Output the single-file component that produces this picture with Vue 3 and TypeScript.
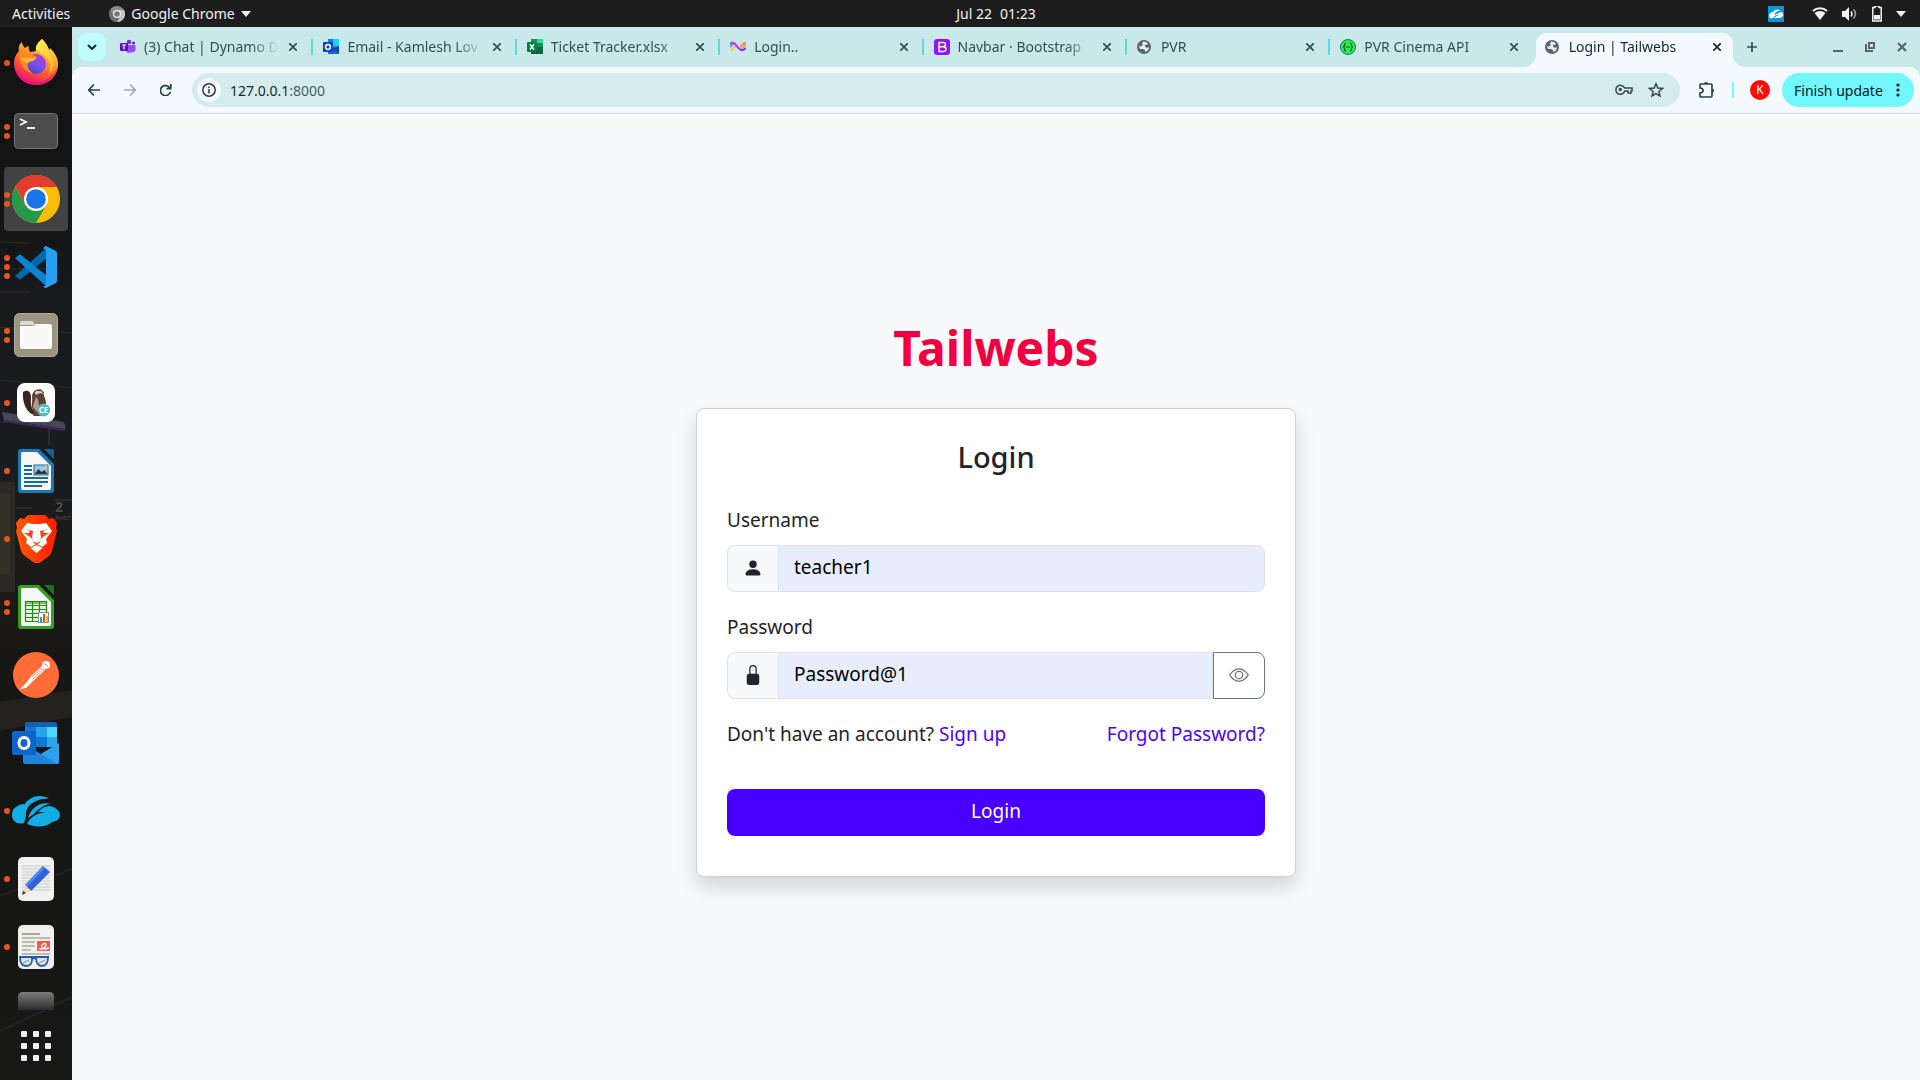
<script setup lang="ts">
import { ref } from 'vue'

interface Tab {
  title: string
  icon: string
  active?: boolean
}

interface DockApp {
  name: string
  windows: number
  focused?: boolean
}

const tabs: Tab[] = [
  { title: '(3) Chat | Dynamo D', icon: 'teams' },
  { title: 'Email - Kamlesh Lov', icon: 'outlook' },
  { title: 'Ticket Tracker.xlsx', icon: 'excel' },
  { title: 'Login..', icon: 'wave' },
  { title: 'Navbar · Bootstrap', icon: 'bootstrap' },
  { title: 'PVR', icon: 'globe' },
  { title: 'PVR Cinema API', icon: 'swagger' },
  { title: 'Login | Tailwebs', icon: 'globe', active: true },
]

const apps: DockApp[] = [
  { name: 'Firefox', windows: 1 },
  { name: 'Terminal', windows: 2 },
  { name: 'Chrome', windows: 2, focused: true },
  { name: 'Code', windows: 3 },
  { name: 'Files', windows: 2 },
  { name: 'DBeaver', windows: 1 },
  { name: 'Writer', windows: 1 },
  { name: 'Brave', windows: 1 },
  { name: 'Calc', windows: 2 },
  { name: 'Postman', windows: 0 },
  { name: 'Outlook', windows: 0 },
  { name: 'Zscaler', windows: 1 },
  { name: 'Editor', windows: 1 },
  { name: 'Documents', windows: 1 },
  { name: 'More', windows: 0 },
]

const username = ref<string>('teacher1')
const password = ref<string>('Password@1')
const visible = ref<boolean>(true)
</script>

<template>
  <div class="desktop">
    <header class="topbar">
      <div class="topbar-left">
        <button class="top-btn">Activities</button>
        <button class="top-btn app-menu">
          <svg width="16" height="16" viewBox="0 0 16 16">
            <circle cx="8" cy="8" r="8" fill="#8c8c8c" />
            <path d="M8 4h7A8 8 0 0 1 8 16l3.500-6z" fill="#c4c4c4" />
            <path d="M1.200 4A8 8 0 0 0 8 16l3-6-6 0z" fill="#6e6e6e" />
            <circle cx="8" cy="8" r="4" fill="#eee" />
            <circle cx="8" cy="8" r="2.800" fill="#777" />
          </svg>
          Google Chrome
          <svg width="10" height="6" viewBox="0 0 10 6"><path d="M0 0h10L5 6z" fill="#f2f2f2" /></svg>
        </button>
      </div>
      <button class="top-btn clock"><span>Jul 22</span><span>01:23</span></button>
      <div class="tray">
        <svg class="tray-cloud" width="16" height="16" viewBox="0 0 16 16">
          <path d="M0 0h16v16H0z" fill="#0a96dc" />
          <path d="M1 10c0-3 2-4 4-4 2-3 6-3 8-1-4-1-6 2-7 4l7-3c3 1 3 5-1 6H6c2-2 4-3 6-3-3-1-5 0-7 3-2 1-4 0-4-2z" fill="#fff" />
        </svg>
        <svg width="16" height="14" viewBox="0 0 16 14">
          <path d="M1 4a10.500 10.500 0 0 1 14 0" fill="none" stroke="#f2f2f2" stroke-width="2" />
          <path d="M2.500 6a8.500 8.500 0 0 1 11 0L8 13z" fill="#f2f2f2" />
        </svg>
        <svg width="16" height="14" viewBox="0 0 16 14">
          <path d="M0 4h3l4-4v14l-4-4H0z" fill="#f2f2f2" />
          <path d="M9 4.500q2 2.500 0 5" fill="none" stroke="#f2f2f2" stroke-width="1.500" />
          <path d="M11.500 2.500q4 4.500 0 9" fill="none" stroke="#a5a5a5" stroke-width="1.500" />
        </svg>
        <svg width="10" height="16" viewBox="0 0 10 16">
          <path d="M3 0h4v1.500h2.200V15H.8V1.500H3z" fill="none" stroke="#f2f2f2" stroke-width="1.500" />
          <path d="M2 9h6v4.500H2z" fill="#f2f2f2" />
        </svg>
        <svg width="10" height="6" viewBox="0 0 10 6"><path d="M0 0h10L5 6z" fill="#f2f2f2" /></svg>
      </div>
    </header>

    <div class="workspace">
      <nav class="dock" aria-label="Dock">
        <svg class="wallpaper" width="72" height="1053" viewBox="0 27 72 1053" aria-hidden="true">
          <defs>
            <linearGradient id="wall" x1="0" y1="0" x2="0" y2="1">
              <stop offset="0" stop-color="#131313" />
              <stop offset=".18" stop-color="#141414" />
              <stop offset=".27" stop-color="#191a1c" />
              <stop offset=".42" stop-color="#1b1c1f" />
              <stop offset=".52" stop-color="#1b1a18" />
              <stop offset=".66" stop-color="#151515" />
              <stop offset="1" stop-color="#181815" />
            </linearGradient>
          </defs>
          <path d="M0 27h72v1053H0z" fill="url(#wall)" />
          <path d="M0 242l30 1M0 292h30M0 269h60M0 327l72 6M0 380l72 8" stroke="#3a352a" opacity=".7" />
          <path d="M2 412l62 10 2 7-62-9z" fill="#4b4657" />
          <path d="M3 421l62 9" stroke="#3c2a62" stroke-width="2" />
          <path d="M0 482h15v110H0z" fill="#2c2924" />
          <path d="M0 494h10v80H0z" fill="#343127" />
          <path d="M49 425v20M54 500h18M16 508h16" stroke="#3a3a38" />
          <path d="M0 702l72-12v27L0 731z" fill="#24211c" />
          <path d="M0 896l72-27M0 1031l72-34" stroke="#2e2e28" />
          <text x="55" y="512" class="wall-digit">2</text>
          <text x="55" y="520" class="wall-word">Aven</text>
        </svg>
        <ul class="dock-list">
          <li v-for="app in apps" :key="app.name">
            <button class="dock-item" :class="{ focused: app.focused }" :aria-label="app.name">
              <span class="dots"><i v-for="n in app.windows" :key="n"></i></span>

              <svg v-if="app.name === 'Firefox'" viewBox="0 0 48 48">
                <defs>
                  <linearGradient id="ffBody" x1=".8" y1="0" x2=".3" y2="1">
                    <stop offset="0" stop-color="#fff44f" /><stop offset=".35" stop-color="#ffa92a" />
                    <stop offset=".65" stop-color="#ff5a36" /><stop offset="1" stop-color="#e5087b" />
                  </linearGradient>
                  <linearGradient id="ffGlobe" x1=".8" y1="0" x2=".3" y2="1">
                    <stop offset="0" stop-color="#b833e1" /><stop offset=".5" stop-color="#7d50ef" /><stop offset="1" stop-color="#4547c8" />
                  </linearGradient>
                  <linearGradient id="ffFlame" x1="0" y1="0" x2="1" y2="1">
                    <stop offset="0" stop-color="#fff44f" /><stop offset="1" stop-color="#ffb22c" />
                  </linearGradient>
                </defs>
                <path d="M30 0c4 4 6 8 7 12 1-1 1-2 1-3 5 5 8 10 8 16C46 38 36 46 24 46S2 37 2 24c0-5 2-9 5-12-1-4 1-8 3-9 0 2 1 4 3 6 1-1 3-2 4-2-1 2 0 4 1 6l6-1c-1-5 2-9 6-12z" fill="url(#ffBody)" />
                <path d="M30 0c5 5 7 10 9 14 4 8 3 17-3 22 3-5 3-12 0-16-3-4-9-7-12-9 0-5 3-8 6-11z" fill="url(#ffFlame)" />
                <circle cx="24" cy="25" r="10" fill="url(#ffGlobe)" />
                <path d="M7 15c4-3 8-3 11-2 2 3 4 4 7 5-1 3-4 3-7 4-4 3-3 9 3 12C12 34 7 24 7 15z" fill="#ff8a22" />
                <path d="M8 20c5-2 11 0 16-1-2 4-6 3-9 5-3-1-5-2-7-4z" fill="#ffb53a" />
                <path d="M3 29c4 10 13 15 23 14 9-1 16-7 19-14-2 10-10 17-21 17S5 39 3 29z" fill="#e8117a" opacity=".7" />
              </svg>

              <svg v-else-if="app.name === 'Terminal'" viewBox="0 0 48 48">
                <rect x="2.500" y="6.500" width="43" height="35" rx="4" fill="#4c4c4c" stroke="#747474" />
                <path d="M8 12l6 3-6 3" fill="none" stroke="#fff" stroke-width="1.800" />
                <path d="M15 21h8" stroke="#fff" stroke-width="1.800" />
              </svg>

              <svg v-else-if="app.name === 'Chrome'" viewBox="0 0 48 48">
                <circle cx="24" cy="24" r="24" fill="#fbbc05" />
                <path d="M3.200 12A24 24 0 0 1 44.800 12H24L13.600 30z" fill="#e33b2e" />
                <path d="M3.200 12A24 24 0 0 0 24 48L34.400 30H13.600z" fill="#279847" />
                <circle cx="24" cy="24" r="12" fill="#fff" />
                <circle cx="24" cy="24" r="9.800" fill="#1a73e8" />
              </svg>

              <svg v-else-if="app.name === 'Code'" viewBox="0 0 48 48">
                <path d="M3 33l4 3q1 1 2 0l26-21V4z" fill="#0069ab" />
                <path d="M3 15l4-3q1-1 2 0l26 21v11z" fill="#0a86d0" />
                <path d="M34 3l10 5q1 1 1 2v28q0 1-1 2l-10 5q-2 0-3-2 3 1 3-2V8q0-3-3-2 1-3 3-3z" fill="#25a0f2" />
              </svg>

              <svg v-else-if="app.name === 'Files'" viewBox="0 0 48 48">
                <rect x="2.500" y="2.500" width="43" height="43" rx="5" fill="#9c9482" stroke="#b3ad9f" />
                <path d="M8 14v-2q0-2 2-2h9q2 0 3 2l1 2z" fill="#dedace" />
                <path d="M8 15h12q2 0 3-1l1-1h14q2 0 2 2v21q0 2-2 2H10q-2 0-2-2z" fill="#faf9f7" />
              </svg>

              <svg v-else-if="app.name === 'DBeaver'" viewBox="0 0 48 48">
                <rect x="5" y="4" width="38" height="39" rx="8" fill="#fff" />
                <path d="M11 13c5-3 8 0 8 5s-1 9 3 14l1 4c-8-1-13-12-12-23z" fill="#3a2521" />
                <path d="M20 17c1-5 4-7 8-7 4 1 4 4 4 7 3 5 3 14-2 20h-9c2-3 0-6-1-9s1-7 0-11z" fill="#5a4037" />
                <path d="M24 18c3 2 4 8 1 15l-4-5c0-3 2-6 3-10z" fill="#b69a86" />
                <path d="M22 12l3-2 6 1 1 4-4-1-4 2z" fill="#d9cec6" />
                <path d="M22 13q5-4 10 1" stroke="#3a2521" fill="none" />
                <circle cx="31.500" cy="31" r="6.500" fill="#52b9bf" />
                <text x="31.500" y="34" text-anchor="middle" class="dbeaver-label">CE</text>
              </svg>

              <svg v-else-if="app.name === 'Writer' || app.name === 'Calc'" viewBox="0 0 48 48">
                <g :fill="app.name === 'Writer' ? '#1c79b4' : '#35a121'">
                  <path d="M9 2h18l15 15v26q0 3-3 3H9q-3 0-3-3V5q0-3 3-3z" />
                  <path d="M32 2h8q2 0 2 2v8z" :fill="app.name === 'Writer' ? '#0f669e' : '#18751a'" />
                </g>
                <path d="M10 5h15l14 14v22q0 2-2 2H11q-2 0-2-2V7q0-2 1-2z" fill="#f7f7f7" />
                <template v-if="app.name === 'Writer'">
                  <path d="M12 19h8M12 23h8M12 27h8M12 31h24M12 35h24M12 39h18" stroke="#156ba8" stroke-width="2" />
                  <rect x="22" y="18" width="14" height="10" fill="#9cc7e8" stroke="#156ba8" />
                  <path d="M22.500 27l4-5 3 3 3-2 3 4z" fill="#333" />
                  <path d="M32 18.500h3.500V22z" fill="#f5c211" />
                </template>
                <template v-else>
                  <rect x="13" y="18" width="22" height="21" fill="#eaf7e3" />
                  <path d="M13 18h22v3H13z" fill="#77c95a" />
                  <path d="M13 18.500h22M13 22.500h22M13 26.500h22M13 30.500h22M13 34.500h22M13 38.500h22M13.500 18v21M20.500 18v21M27.500 18v21M34.500 18v21" stroke="#21891a" stroke-width="1.200" />
                  <rect x="26.500" y="29.500" width="10" height="10" fill="#fff" stroke="#888" />
                  <path d="M28 34h2v5h-2z" fill="#1b9ae0" /><path d="M31 31h2v8h-2z" fill="#e05320" /><path d="M34 33h2v6h-2z" fill="#f3b71c" />
                </template>
              </svg>

              <svg v-else-if="app.name === 'Brave'" viewBox="0 0 48 48">
                <defs><linearGradient id="brave"><stop offset="0" stop-color="#ff5601" /><stop offset="1" stop-color="#ff1f00" /></linearGradient></defs>
                <path d="M16 0h17l4 4 4-1 4 5-1 5 1 3-5 20q-1 3-3 5l-8 6q-4 3-8 0l-8-6q-3-2-4-5L4 16l1-3-1-5 4-5 4 1z" fill="url(#brave)" />
                <path d="M15 8l6 1h7l6-1 6 8-6 8 1 4-5 4-5-3h-1l-5 3-5-4 1-4-6-8z" fill="#fff" />
                <path d="M13 14l8 2-1 7 1 2-3-3-6-4 5 0 1-2zM36 14l-8 2 1 7-1 2 3-3 6-4-5 0-1-2z" fill="#ff4310" />
                <path d="M20 26l4.500 2 4.500-2-4 4h-1z" fill="#ff4310" />
                <path d="M24.500 30l6 3-6 5-6-5z" fill="#fff" />
              </svg>

              <svg v-else-if="app.name === 'Postman'" viewBox="0 0 48 48">
                <circle cx="24" cy="24" r="23" fill="#ff6c37" />
                <circle cx="34" cy="14" r="4" fill="#fff" />
                <path d="M19 25L30 15l3 4-11 10-5 2z" fill="#fff" />
                <path d="M19 27l-4 5-5 5 4-1 9-9" fill="#fff" stroke="#fff" stroke-width="1.500" />
                <path d="M20 26l10-9M21 28l11-10M31 12l5 3" stroke="#ff6c37" stroke-width=".8" />
              </svg>

              <svg v-else-if="app.name === 'Outlook'" viewBox="0 0 48 48">
                <path d="M13 5q0-2 2-2h28q2 0 2 2v22H13z" fill="#0f5fb5" />
                <path d="M13 8h11v10H13z" fill="#1976cf" /><path d="M24 8h11v10H24z" fill="#28a5e8" /><path d="M35 8h10v10H35z" fill="#50d9ff" />
                <path d="M13 18h11v10H13z" fill="#1066bc" /><path d="M24 18h11v10H24z" fill="#0a78d7" /><path d="M35 18h10v10H35z" fill="#29a8ec" />
                <path d="M11 24l18 11 18-11v19q0 2-2 2H13q-2 0-2-2z" fill="#1d86dc" />
                <path d="M29 35l18-11v19q0 2-2 2z" fill="#2ea1ed" />
                <rect y="12" width="24" height="24" rx="2" fill="#0b66c9" />
                <ellipse cx="12" cy="24" rx="5" ry="5.500" fill="none" stroke="#fff" stroke-width="3" />
              </svg>

              <svg v-else-if="app.name === 'Zscaler'" viewBox="0 0 48 48">
                <path d="M12 36C5 38 0 34 0 28c0-7 6-11 13-11 4-7 16-11 24-5-10-1-19 4-22 10-2 4 0 7-3 14z" fill="#12afe6" />
                <path d="M16 31c3-10 12-17 23-14-6 0-13 5-17 10z" fill="#12afe6" />
                <path d="M15 37c4-8 12-12 19-11-2-1-5-1-8-1 5-6 12-8 17-4 7 4 7 13-3 14-6 6-18 5-25 2z" fill="#12afe6" />
              </svg>

              <svg v-else-if="app.name === 'Editor'" viewBox="0 0 48 48">
                <rect x="6" y="2" width="36" height="44" rx="5" fill="#f1f1f1" />
                <path d="M10 11h28M10 14h28M10 17h28M10 20h28M10 23h28M10 26h28M10 29h28M10 32h28M10 35h28" stroke="#c6c6c6" />
                <path d="M31 11l7 6-19 19-6-6z" fill="#2d63dd" />
                <path d="M31 11l2 2-18 19-2-2z" fill="#5287f2" />
                <path d="M13 30l6 6-9 3z" fill="#f8d8b3" /><path d="M11 36l3 2-4 2z" fill="#333" />
              </svg>

              <svg v-else-if="app.name === 'Documents'" viewBox="0 0 48 48">
                <rect x="6" y="2" width="36" height="44" rx="5" fill="#f0f0ef" />
                <path d="M10 11h18" stroke="#aaa693" stroke-width="2" />
                <path d="M10 15h28M10 19h13M10 23h13M10 27h9M10 31h28" stroke="#bfbcae" stroke-width="2" />
                <path d="M25 18h13v10H25z" fill="#f45a4e" />
                <path d="M27 26c3 1 7-2 7-4s-3-2-4 0 0 4 3 4l4-1" fill="none" stroke="#fff" stroke-width="1.300" />
                <path d="M8 34h12q1 9-6 9-6 0-6-9zM24 34h12q0 9-6 9t-6-9z" fill="#c9dcec" fill-opacity=".6" stroke="#215fa5" stroke-width="1.800" />
                <path d="M7 34h30M20 36q2-2 4 0" fill="none" stroke="#215fa5" stroke-width="2" />
                <path d="M11 40l6-3M27 40l6-3" stroke="#888" />
              </svg>

              <svg v-else viewBox="0 0 48 48">
                <defs><linearGradient id="fade" x1="0" y1="0" x2="0" y2="1"><stop offset="0" stop-color="#7c7c7c" /><stop offset="1" stop-color="#2c2c2c" /></linearGradient></defs>
                <path d="M6 6q0-5 5-5h26q5 0 5 5v13H6z" fill="url(#fade)" />
              </svg>
            </button>
          </li>
        </ul>
        <button class="show-apps" aria-label="Show applications"><i v-for="n in 9" :key="n"></i></button>
      </nav>

      <section class="browser">
        <div class="tabstrip">
          <button class="tab-search" aria-label="Search tabs">
            <svg width="10" height="6" viewBox="0 0 10 6"><path d="M1 1l4 4 4-4" fill="none" stroke="#0b2c2f" stroke-width="2" /></svg>
          </button>
          <ul class="tabs">
            <li v-for="(tab, i) in tabs" :key="i" class="tab" :class="{ active: tab.active }">
              <div class="tab-body">
                <svg class="favicon" viewBox="0 0 16 16">
                  <template v-if="tab.icon === 'teams'">
                    <circle cx="9" cy="3" r="2.300" fill="#7b30dc" /><circle cx="13.500" cy="4" r="1.500" fill="#5b22a8" />
                    <path d="M6 6h9q.5 0 .5 1v4q-1 3-4 2-2 2-5 0z" fill="#9a4cf2" />
                    <rect y="4" width="8" height="8" rx="1" fill="#5b10c4" />
                    <path d="M2 6h4M4 6v4.500" stroke="#fff" stroke-width="1.200" />
                  </template>
                  <template v-else-if="tab.icon === 'outlook'">
                    <path d="M5 0h11v15H5z" fill="#0a83dc" /><path d="M10 0h6v7h-6z" fill="#22cdfb" /><path d="M5 9l11-1v7H5z" fill="#1469c8" />
                    <path d="M9 10l7 4v-7z" fill="#0d4ca8" />
                    <rect y="3" width="10" height="10" rx="1" fill="#0c48b5" />
                    <circle cx="5" cy="8" r="2.400" fill="none" stroke="#fff" stroke-width="1.500" />
                  </template>
                  <template v-else-if="tab.icon === 'excel'">
                    <path d="M4 0h12v15H4z" fill="#14925a" /><path d="M10 0h6v4h-6z" fill="#2edb91" /><path d="M4 8h7v7H4z" fill="#185c37" /><path d="M11 8h5v7h-5z" fill="#0c6b40" />
                    <rect y="3" width="10" height="10" rx="1" fill="#078045" />
                    <path d="M3 5.500l4 5M7 5.500l-4 5" stroke="#fff" stroke-width="1.500" />
                  </template>
                  <template v-else-if="tab.icon === 'wave'">
                    <path d="M1 12l5-6" stroke="#ffc23c" stroke-width="2" fill="none" />
                    <path d="M0 8l4-4" stroke="#35a8f5" stroke-width="2" fill="none" />
                    <path d="M11 11l5-6" stroke="#ff9a3c" stroke-width="2" fill="none" />
                    <path d="M10 8l4-4h2" stroke="#ff7557" stroke-width="1.500" fill="none" />
                    <path d="M0 5q3-3 6 1t5 5q2 1 5-2" stroke="#7a3ff2" stroke-width="2" fill="none" />
                    <path d="M1 4q3-1 5 2l2 3" stroke="#d63af2" stroke-width="2" fill="none" />
                  </template>
                  <template v-else-if="tab.icon === 'bootstrap'">
                    <rect width="16" height="16" rx="3" fill="#9013fe" />
                    <path d="M5 3.500h4q2.500 0 2.500 2T9 7.800q3 0 3 2.400t-3 2.300H5zM5 7.800h4" fill="none" stroke="#fff" stroke-width="1.400" />
                  </template>
                  <template v-else-if="tab.icon === 'swagger'">
                    <circle cx="8" cy="8" r="7.500" fill="#28ee42" stroke="#24707a" />
                    <path d="M6 4q-1.500 0-1.500 2T3 8q1.500 0 1.500 2T6 12M10 4q1.500 0 1.500 2T13 8q-1.500 0-1.500 2T10 12M6 8h4" fill="none" stroke="#17544a" stroke-width="1.200" />
                  </template>
                  <template v-else>
                    <circle cx="7" cy="8" r="7" fill="#5f6368" />
                    <path d="M6 2.500q3 0 5 2L10 6l-2-.5v2l2 1.500 2-1q0 4-4 5v-2L6 10H3L2 7l2 .5 2-1.500-1-1z" fill="#dff0f3" />
                  </template>
                </svg>
                <span class="tab-title">{{ tab.title }}</span>
                <button class="tab-close" aria-label="Close tab">
                  <svg width="8" height="8" viewBox="0 0 8 8"><path d="M0 0l8 8M8 0L0 8" stroke="currentColor" stroke-width="1.700" /></svg>
                </button>
              </div>
            </li>
          </ul>
          <div class="window-tools">
            <button class="icon-btn" aria-label="New tab">
              <svg width="10" height="10" viewBox="0 0 10 10"><path d="M5 0v10M0 5h10" stroke="#2c5557" stroke-width="1.700" /></svg>
            </button>
            <div class="window-controls">
              <button class="icon-btn" aria-label="Minimize"><svg width="10" height="10" viewBox="0 0 10 10"><path d="M0 9h10" stroke="#5f6368" stroke-width="2" /></svg></button>
              <button class="icon-btn" aria-label="Restore"><svg width="10" height="10" viewBox="0 0 10 10"><path d="M4 1h5v5H4zM1 2v7h7" fill="none" stroke="#5f6368" stroke-width="2" /></svg></button>
              <button class="icon-btn" aria-label="Close"><svg width="10" height="10" viewBox="0 0 10 10"><path d="M1 1l8 8M9 1L1 9" stroke="#5f6368" stroke-width="2.200" /></svg></button>
            </div>
          </div>
        </div>

        <div class="toolbar">
          <div class="nav-buttons">
            <button class="icon-btn" aria-label="Back"><svg width="12" height="12" viewBox="0 0 12 12"><path d="M12 6H1M6 .5L.8 6 6 11.500" fill="none" stroke="#21494b" stroke-width="1.700" /></svg></button>
            <button class="icon-btn" aria-label="Forward"><svg width="12" height="12" viewBox="0 0 12 12"><path d="M0 6h11M6 .5L11.200 6 6 11.500" fill="none" stroke="#a3abae" stroke-width="1.700" /></svg></button>
            <button class="icon-btn" aria-label="Reload"><svg width="12" height="12" viewBox="1 0 13 13"><path d="M12.300 8.500A5.500 5.500 0 1 1 11.500 4M12.700 0v5H8" fill="none" stroke="#21494b" stroke-width="1.900" /></svg></button>
          </div>
          <div class="omnibox">
            <button class="site-info" aria-label="Site information">
              <svg width="14" height="14" viewBox="0 0 14 14"><circle cx="7" cy="7" r="6.200" fill="none" stroke="#2f3a3b" stroke-width="1.500" /><path d="M7 6v4.500M7 3.500v1.500" stroke="#2f3a3b" stroke-width="1.500" /></svg>
            </button>
            <div class="url">127.0.0.1<span>:8000</span></div>
            <button class="icon-btn" aria-label="Passwords">
              <svg width="18" height="12" viewBox="0 0 18 12"><path d="M9.500 4H17v3h-1v2h-3V7H9.700A4.500 4.500 0 1 1 9.500 4z" fill="none" stroke="#39494b" stroke-width="1.500" /><circle cx="5.300" cy="5.500" r="1.700" fill="#39494b" /></svg>
            </button>
            <button class="icon-btn" aria-label="Bookmark">
              <svg width="16" height="16" viewBox="0 0 16 16"><path d="M8 1.800l1.800 4.300 4.700.4-3.600 3 1.100 4.500L8 11.600 4 14l1.100-4.500-3.600-3 4.700-.4z" fill="none" stroke="#39494b" stroke-width="1.500" /></svg>
            </button>
          </div>
          <div class="extras">
            <button class="icon-btn" aria-label="Extensions">
              <svg width="18" height="18" viewBox="0 0 18 18"><path d="M2 4q0-1 1-1h10q1 0 1 1v11q0 1-1 1H3q-1 0-1-1v-3q3 0 3-2.500T2 7z" fill="none" stroke="#21494b" stroke-width="1.700" /><path d="M6 3a2 2 0 0 1 4 0zM14 7.500a2 2 0 0 1 0 4z" fill="#21494b" /></svg>
            </button>
            <span class="rule"></span>
            <button class="avatar">K</button>
            <button class="update">
              Finish update
              <svg width="4" height="14" viewBox="0 0 4 14"><g fill="#042022"><circle cx="2" cy="2" r="1.600" /><circle cx="2" cy="7" r="1.600" /><circle cx="2" cy="12" r="1.600" /></g></svg>
            </button>
          </div>
        </div>

        <main class="page">
          <h1>Tailwebs</h1>
          <form class="card" @submit.prevent>
            <h2>Login</h2>
            <label for="username">Username</label>
            <div class="group">
              <span class="addon">
                <svg width="20" height="20" viewBox="0 0 16 16"><path d="M3 14s-1 0-1-1 1-4 6-4 6 3 6 4-1 1-1 1zm5-6a3 3 0 1 0 0-6 3 3 0 0 0 0 6" fill="#212529" /></svg>
              </span>
              <input id="username" v-model="username" type="text" autocomplete="off" />
            </div>
            <label for="password">Password</label>
            <div class="group">
              <span class="addon">
                <svg width="20" height="20" viewBox="0 0 16 16"><path d="M8 1a2 2 0 0 1 2 2v4H6V3a2 2 0 0 1 2-2m3 6V3a3 3 0 0 0-6 0v4a2 2 0 0 0-2 2v5a2 2 0 0 0 2 2h6a2 2 0 0 0 2-2V9a2 2 0 0 0-2-2" fill="#212529" /></svg>
              </span>
              <input id="password" v-model="password" :type="visible ? 'text' : 'password'" autocomplete="off" />
              <button type="button" class="reveal" aria-label="Show password" @click="visible = !visible">
                <svg width="20" height="20" viewBox="0 0 16 16" fill="#6c757d"><path d="M16 8s-3-5.500-8-5.500S0 8 0 8s3 5.500 8 5.500S16 8 16 8M1.173 8a13 13 0 0 1 1.660-2.043C4.120 4.668 5.880 3.500 8 3.500s3.879 1.168 5.168 2.457A13 13 0 0 1 14.828 8q-.086.130-.195.288c-.335.480-.830 1.120-1.465 1.755C11.879 11.332 10.119 12.500 8 12.500s-3.879-1.168-5.168-2.457A13 13 0 0 1 1.172 8z" /><path d="M8 5.500a2.500 2.500 0 1 0 0 5 2.500 2.500 0 0 0 0-5M4.500 8a3.500 3.500 0 1 1 7 0 3.500 3.500 0 0 1-7 0" /></svg>
              </button>
            </div>
            <div class="links">
              <span>Don't have an account? <a href="#signup">Sign up</a></span>
              <a href="#forgot">Forgot Password?</a>
            </div>
            <button type="submit" class="submit">Login</button>
          </form>
        </main>
      </section>
    </div>
  </div>
</template>

<style>
body {
  margin: 0;
}
</style>

<style scoped>
* {
  box-sizing: border-box;
}
button {
  border: 0;
  padding: 0;
  background: none;
  font: inherit;
  color: inherit;
  cursor: pointer;
}
ul {
  list-style: none;
  margin: 0;
  padding: 0;
}
svg {
  display: block;
  flex: none;
}
.desktop {
  display: flex;
  flex-direction: column;
  height: 100vh;
  font-family: 'Noto Sans', 'Open Sans', sans-serif;
  font-size: 14px;
  color: #212529;
}

/* System bar */
.topbar {
  flex: none;
  display: grid;
  grid-template-columns: 1fr auto 1fr;
  align-items: center;
  height: 27px;
  padding: 0 14px 0 12px;
  background: #1d1d1d;
  color: #f2f2f2;
}
.topbar-left {
  display: flex;
  gap: 39px;
}
.app-menu {
  display: flex;
  align-items: center;
  gap: 6px;
}
.clock {
  display: flex;
  gap: 8px;
  margin-left: 74px;
}
.tray {
  display: flex;
  align-items: center;
  justify-content: flex-end;
  gap: 14px;
}
.tray-cloud {
  margin-right: 14px;
}
.workspace {
  flex: 1;
  min-height: 0;
  display: flex;
}

/* Dock */
.dock {
  position: relative;
  flex: none;
  display: flex;
  flex-direction: column;
  width: 72px;
  background: #151515;
  overflow: hidden;
}
.wallpaper {
  position: absolute;
  top: 0;
  left: 0;
}
.wall-digit {
  font-size: 14px;
  font-weight: 700;
  fill: #4a4a48;
}
.wall-word {
  font-size: 7px;
  fill: #454543;
}
.dock-list {
  position: relative;
  flex: 1;
  min-height: 0;
  overflow: hidden;
  display: flex;
  flex-direction: column;
  gap: 4px;
  padding: 4px 4px 0;
}
.dock-item {
  position: relative;
  display: flex;
  align-items: center;
  justify-content: center;
  width: 64px;
  height: 64px;
  border-radius: 4px;
}
.dock-item.focused {
  background: #424242;
}
.dock-item svg {
  width: 48px;
  height: 48px;
}
.dots {
  position: absolute;
  left: 0;
  top: 0;
  bottom: 0;
  display: flex;
  flex-direction: column;
  justify-content: center;
  gap: 3px;
}
.dots i {
  width: 6px;
  height: 6px;
  border-radius: 3px;
  background: #e95420;
}
.dbeaver-label {
  font-size: 8px;
  font-weight: 700;
  fill: #fff;
}
.show-apps {
  position: relative;
  flex: none;
  display: grid;
  grid-template-columns: repeat(3, 6px);
  place-content: center;
  gap: 6px;
  height: 70px;
  padding-top: 2px;
}
.show-apps i {
  width: 6px;
  height: 6px;
  border-radius: 1px;
  background: #f2f2f2;
}

/* Browser window */
.browser {
  flex: 1;
  min-width: 0;
  display: flex;
  flex-direction: column;
  background: #c8e8ea;
}
.tabstrip {
  flex: none;
  display: flex;
  height: 40px;
  padding-left: 6px;
}
.tab-search {
  flex: none;
  display: grid;
  place-items: center;
  width: 28px;
  height: 28px;
  margin: 6px 4px 0 0;
  border-radius: 9px;
  background: #c0fdff;
}
.tabs {
  flex: 1;
  min-width: 0;
  display: grid;
  grid-auto-flow: column;
  grid-auto-columns: minmax(0, 1fr);
}
.tab {
  position: relative;
  min-width: 0;
  padding-top: 6px;
  color: #2c5254;
}
.tab::after {
  content: '';
  position: absolute;
  right: 0;
  top: 12px;
  width: 2px;
  height: 16px;
  background: #58dbe3;
}
.tab:nth-last-child(-n + 2)::after {
  display: none;
}
.tab-body {
  display: flex;
  align-items: center;
  height: 28px;
  padding: 0 14px 0 10px;
}
.active {
  padding: 6px 4px 0 2px;
  color: #152628;
}
.active .tab-body {
  position: relative;
  height: 34px;
  padding: 0 10px 6px 9px;
  border-radius: 10px 10px 0 0;
  background: #f3f9fc;
}
.active .tab-body::before,
.active .tab-body::after {
  content: '';
  position: absolute;
  bottom: 0;
  width: 12px;
  height: 12px;
}
.active .tab-body::before {
  right: 100%;
  background: radial-gradient(circle at 0 0, transparent 12px, #f3f9fc 12px);
}
.active .tab-body::after {
  left: 100%;
  background: radial-gradient(circle at 100% 0, transparent 12px, #f3f9fc 12px);
}
.favicon {
  width: 16px;
  height: 16px;
}
.tab-title {
  flex: 1;
  min-width: 0;
  margin: 0 8px;
  padding-bottom: 2px;
  white-space: nowrap;
  overflow: hidden;
  mask-image: linear-gradient(to right, #000 calc(100% - 28px), transparent);
}
.tab-close {
  display: grid;
  place-items: center;
  width: 12px;
  height: 16px;
}
.window-tools {
  flex: none;
  display: flex;
  align-items: center;
  justify-content: space-between;
  width: 183px;
  padding: 0 12px 0 9px;
}
.window-controls {
  display: flex;
  gap: 20px;
}
.icon-btn {
  display: grid;
  place-items: center;
  flex: none;
}
.window-tools .icon-btn {
  min-width: 12px;
}
.toolbar {
  flex: none;
  display: flex;
  align-items: center;
  height: 47px;
  border-bottom: 1px solid #d0e4e7;
  border-radius: 10px 10px 0 0;
  background: #f3f9fc;
}
.nav-buttons {
  display: flex;
  align-items: center;
  gap: 24px;
  padding: 0 20px 0 16px;
}
.omnibox {
  flex: 1;
  min-width: 0;
  display: flex;
  align-items: center;
  height: 34px;
  padding: 0 16px 0 5px;
  gap: 15px;
  border-radius: 17px;
  background: #d5eced;
}
.site-info {
  display: grid;
  place-items: center;
  width: 24px;
  height: 24px;
  margin-right: -6px;
  border-radius: 12px;
  background: #f3f9fc;
}
.url {
  flex: 1;
  color: #172a2c;
}
.url span {
  color: #465d5f;
}
.extras {
  display: flex;
  align-items: center;
  padding: 0 6px 0 18px;
}
.rule {
  width: 2px;
  height: 16px;
  margin: 0 16px;
  background: #73f7ff;
}
.avatar {
  width: 20px;
  height: 20px;
  border-radius: 10px;
  background: #ff0c05;
  color: #fff;
  font-size: 12px;
  line-height: 20px;
}
.update {
  display: flex;
  align-items: center;
  justify-content: space-between;
  width: 132px;
  height: 34px;
  margin-left: 12px;
  padding: 0 14px 0 12px;
  border-radius: 17px;
  background: #73f7ff;
  color: #042022;
  white-space: nowrap;
}

/* Login page */
.page {
  flex: 1;
  min-height: 0;
  display: flex;
  flex-direction: column;
  align-items: center;
  justify-content: center;
  background: #f8f9fb;
  font-size: 19px;
  line-height: 30px;
}
h1 {
  margin: 0 0 30px;
  font-size: 48px;
  font-weight: 700;
  line-height: 60px;
  color: #f00040;
}
.card {
  width: 600px;
  max-width: 100%;
  padding: 30px 30px 40px;
  border: 1px solid #cfd0d2;
  border-radius: 8px;
  background: #fff;
  box-shadow: 0 10px 20px rgba(0, 0, 0, 0.15);
}
h2 {
  margin: 0 0 30px;
  font-size: 29px;
  font-weight: 500;
  line-height: 36px;
  text-align: center;
}
label {
  display: block;
  margin-bottom: 10px;
}
.group {
  display: flex;
  height: 47px;
  margin-bottom: 20px;
}
.addon {
  display: grid;
  place-items: center;
  width: 51px;
  border: 1px solid #dee2e6;
  border-right: 0;
  border-radius: 8px 0 0 8px;
  background: #f8f9fa;
}
input {
  flex: 1;
  min-width: 0;
  padding: 0 15px 2px;
  border: 1px solid #dee2e6;
  border-radius: 0;
  outline: 0;
  background: #e8edfd;
  font: inherit;
  color: #000;
}
input:last-child {
  border-radius: 0 8px 8px 0;
}
.reveal {
  display: grid;
  place-items: center;
  width: 52px;
  border: 1px solid #6c757d;
  border-radius: 0 8px 8px 0;
}
.links {
  display: flex;
  justify-content: space-between;
  margin-bottom: 40px;
}
a {
  color: #4d00ff;
  text-decoration: none;
}
.submit {
  display: block;
  width: 100%;
  height: 47px;
  padding-bottom: 2px;
  border-radius: 8px;
  background: #4700ff;
  color: #fff;
}
</style>
